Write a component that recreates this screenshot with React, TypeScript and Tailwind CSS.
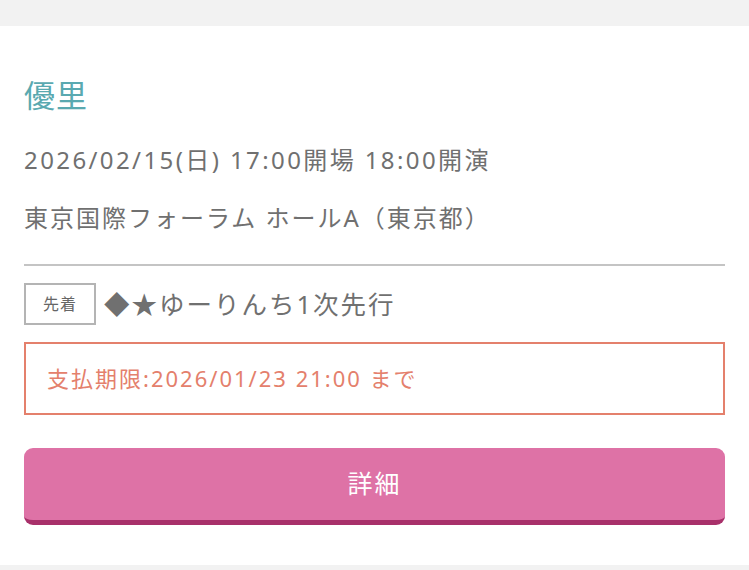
export default function App() {
  return (
    <div
      className="min-h-[570px] w-[749px] bg-[#f2f2f2] pt-[26px] pb-[5px]"
      style={{ fontFamily: '"Noto Sans", "Noto Sans CJK JP", sans-serif' }}
    >
      <div className="bg-white px-6 pt-[47px] pb-[40px]">
        {/* Performer */}
        <h2 className="text-[31px] leading-[44px] tracking-[1px] text-[#5aa9b0]">優里</h2>

        {/* Date & venue */}
        <p className="mt-[26px] text-[24px] leading-[34px] tracking-[2.4px] text-[#707070]">
          2026/02/15(日) 17:00開場 18:00開演
        </p>
        <p className="mt-[24px] text-[24px] leading-[34px] tracking-[2px] text-[#707070]">
          東京国際フォーラム ホールA（東京都）
        </p>

        <div className="mt-[29px] border-t-2 border-[#c4c4c4]" />

        {/* Sale */}
        <div className="mt-[17px] flex items-center gap-2">
          <span className="flex h-[42px] w-[72px] items-center justify-center border-2 border-[#b4b4b4] text-[16px] tracking-[1px] text-[#666]">
            先着
          </span>
          <span className="text-[25.5px] leading-[40px] tracking-[2px] text-[#707070]">◆★ゆーりんち1次先行</span>
        </div>

        {/* Deadline */}
        <div className="mt-[17px] flex h-[73px] items-center border-2 border-[#e4806c] px-[21px]">
          <span className="text-[22px] tracking-[2px] text-[#e4806c]">支払期限:2026/01/23 21:00 まで</span>
        </div>

        {/* Button */}
        <button className="mt-[33px] flex h-[77px] w-full items-center justify-center rounded-[9px] border-b-[5px] border-[#a8306a] bg-[#de72a6] text-[25px] tracking-[2px] text-white">
          詳細
        </button>
      </div>
    </div>
  );
}
